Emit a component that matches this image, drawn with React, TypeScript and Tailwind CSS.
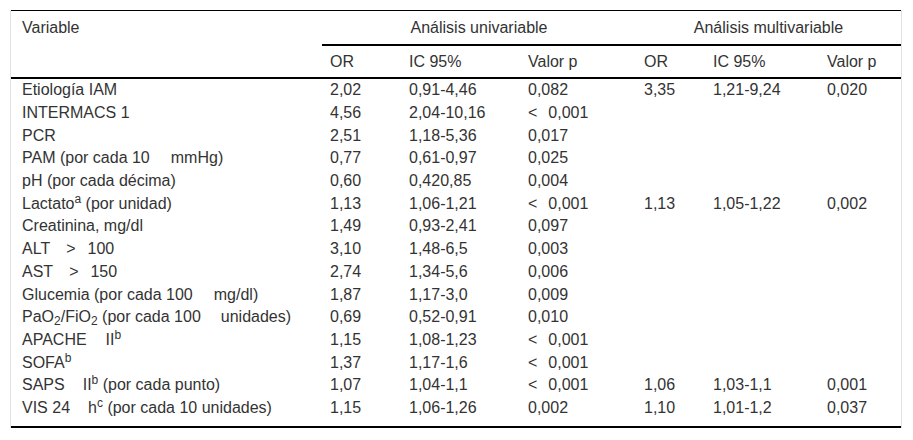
import type { ReactNode } from 'react';

type Row = {
  label: ReactNode;
  uni: [string, string, ReactNode];
  multi?: [string, string, string];
};

function Gap({ w }: { w: string }) {
  return <span className={`inline-block ${w}`} />;
}

const lt = (
  <>
    &lt;<span className="inline-block w-[11px]" />0,001
  </>
);

const rows: Row[] = [
  { label: 'Etiología IAM', uni: ['2,02', '0,91-4,46', '0,082'], multi: ['3,35', '1,21-9,24', '0,020'] },
  { label: 'INTERMACS 1', uni: ['4,56', '2,04-10,16', lt] },
  { label: 'PCR', uni: ['2,51', '1,18-5,36', '0,017'] },
  {
    label: (
      <>
        PAM (por cada 10<Gap w="w-[21px]" />mmHg)
      </>
    ),
    uni: ['0,77', '0,61-0,97', '0,025'],
  },
  { label: 'pH (por cada décima)', uni: ['0,60', '0,420,85', '0,004'] },
  {
    label: (
      <>
        Lactato<sup>a</sup> (por unidad)
      </>
    ),
    uni: ['1,13', '1,06-1,21', lt],
    multi: ['1,13', '1,05-1,22', '0,002'],
  },
  { label: 'Creatinina, mg/dl', uni: ['1,49', '0,93-2,41', '0,097'] },
  {
    label: (
      <>
        ALT<Gap w="w-[16px]" />&gt;<Gap w="w-[12px]" />100
      </>
    ),
    uni: ['3,10', '1,48-6,5', '0,003'],
  },
  {
    label: (
      <>
        AST<Gap w="w-[16px]" />&gt;<Gap w="w-[12px]" />150
      </>
    ),
    uni: ['2,74', '1,34-5,6', '0,006'],
  },
  {
    label: (
      <>
        Glucemia (por cada 100<Gap w="w-[21px]" />mg/dl)
      </>
    ),
    uni: ['1,87', '1,17-3,0', '0,009'],
  },
  {
    label: (
      <>
        PaO<sub>2</sub>/FiO<sub>2</sub> (por cada 100<Gap w="w-[20px]" />unidades)
      </>
    ),
    uni: ['0,69', '0,52-0,91', '0,010'],
  },
  {
    label: (
      <>
        APACHE<Gap w="w-[19px]" />II<sup>b</sup>
      </>
    ),
    uni: ['1,15', '1,08-1,23', lt],
  },
  {
    label: (
      <>
        SOFA<sup>b</sup>
      </>
    ),
    uni: ['1,37', '1,17-1,6', lt],
  },
  {
    label: (
      <>
        SAPS<Gap w="w-[18px]" />II<sup>b</sup> (por cada punto)
      </>
    ),
    uni: ['1,07', '1,04-1,1', lt],
    multi: ['1,06', '1,03-1,1', '0,001'],
  },
  {
    label: (
      <>
        VIS 24<Gap w="w-[18px]" />h<sup>c</sup> (por cada 10 unidades)
      </>
    ),
    uni: ['1,15', '1,06-1,26', '0,002'],
    multi: ['1,10', '1,01-1,2', '0,037'],
  },
];

const subHeads = ['OR', 'IC 95%', 'Valor p', 'OR', 'IC 95%', 'Valor p'];

export default function App() {
  return (
    <div className="min-h-screen bg-white pt-[10px] pl-[10px] font-['Liberation_Sans',Arial,sans-serif] text-[16px] text-[#333]">
      <div className="w-[892px] border-x border-[#e2e2e2]">
        <table className="w-[890px] table-fixed border-separate border-spacing-0 border-t border-b-2 border-black text-left">
          <colgroup>
            <col className="w-[311px]" />
            <col className="w-[79px]" />
            <col className="w-[119px]" />
            <col className="w-[116px]" />
            <col className="w-[69px]" />
            <col className="w-[114px]" />
            <col className="w-[82px]" />
          </colgroup>
          <thead>
            <tr className="h-[35px]">
              <th
                rowSpan={2}
                className="border-b-2 border-black pl-[11px] pt-[7px] align-top font-normal leading-[20px]"
              >
                Variable
              </th>
              <th colSpan={3} className="border-b-2 border-black text-center font-normal leading-[20px]">
                Análisis univariable
              </th>
              <th colSpan={3} className="border-b-2 border-black text-center font-normal leading-[20px]">
                Análisis multivariable
              </th>
            </tr>
            <tr className="h-[33px]">
              {subHeads.map((h, i) => (
                <th key={i} className="border-b-2 border-black pl-2 font-normal leading-[20px]">
                  {h}
                </th>
              ))}
            </tr>
          </thead>
          <tbody>
            {rows.map((r, i) => (
              <tr key={i} className="h-[22.7px] leading-[20px]">
                <td className="pl-[11px] whitespace-nowrap">{r.label}</td>
                <td className="pl-2">{r.uni[0]}</td>
                <td className="pl-2">{r.uni[1]}</td>
                <td className="pl-2 whitespace-nowrap">{r.uni[2]}</td>
                <td className="pl-2">{r.multi?.[0]}</td>
                <td className="pl-2">{r.multi?.[1]}</td>
                <td className="pl-2">{r.multi?.[2]}</td>
              </tr>
            ))}
            <tr className="h-[7px]">
              <td colSpan={7} />
            </tr>
          </tbody>
        </table>
      </div>
    </div>
  );
}
